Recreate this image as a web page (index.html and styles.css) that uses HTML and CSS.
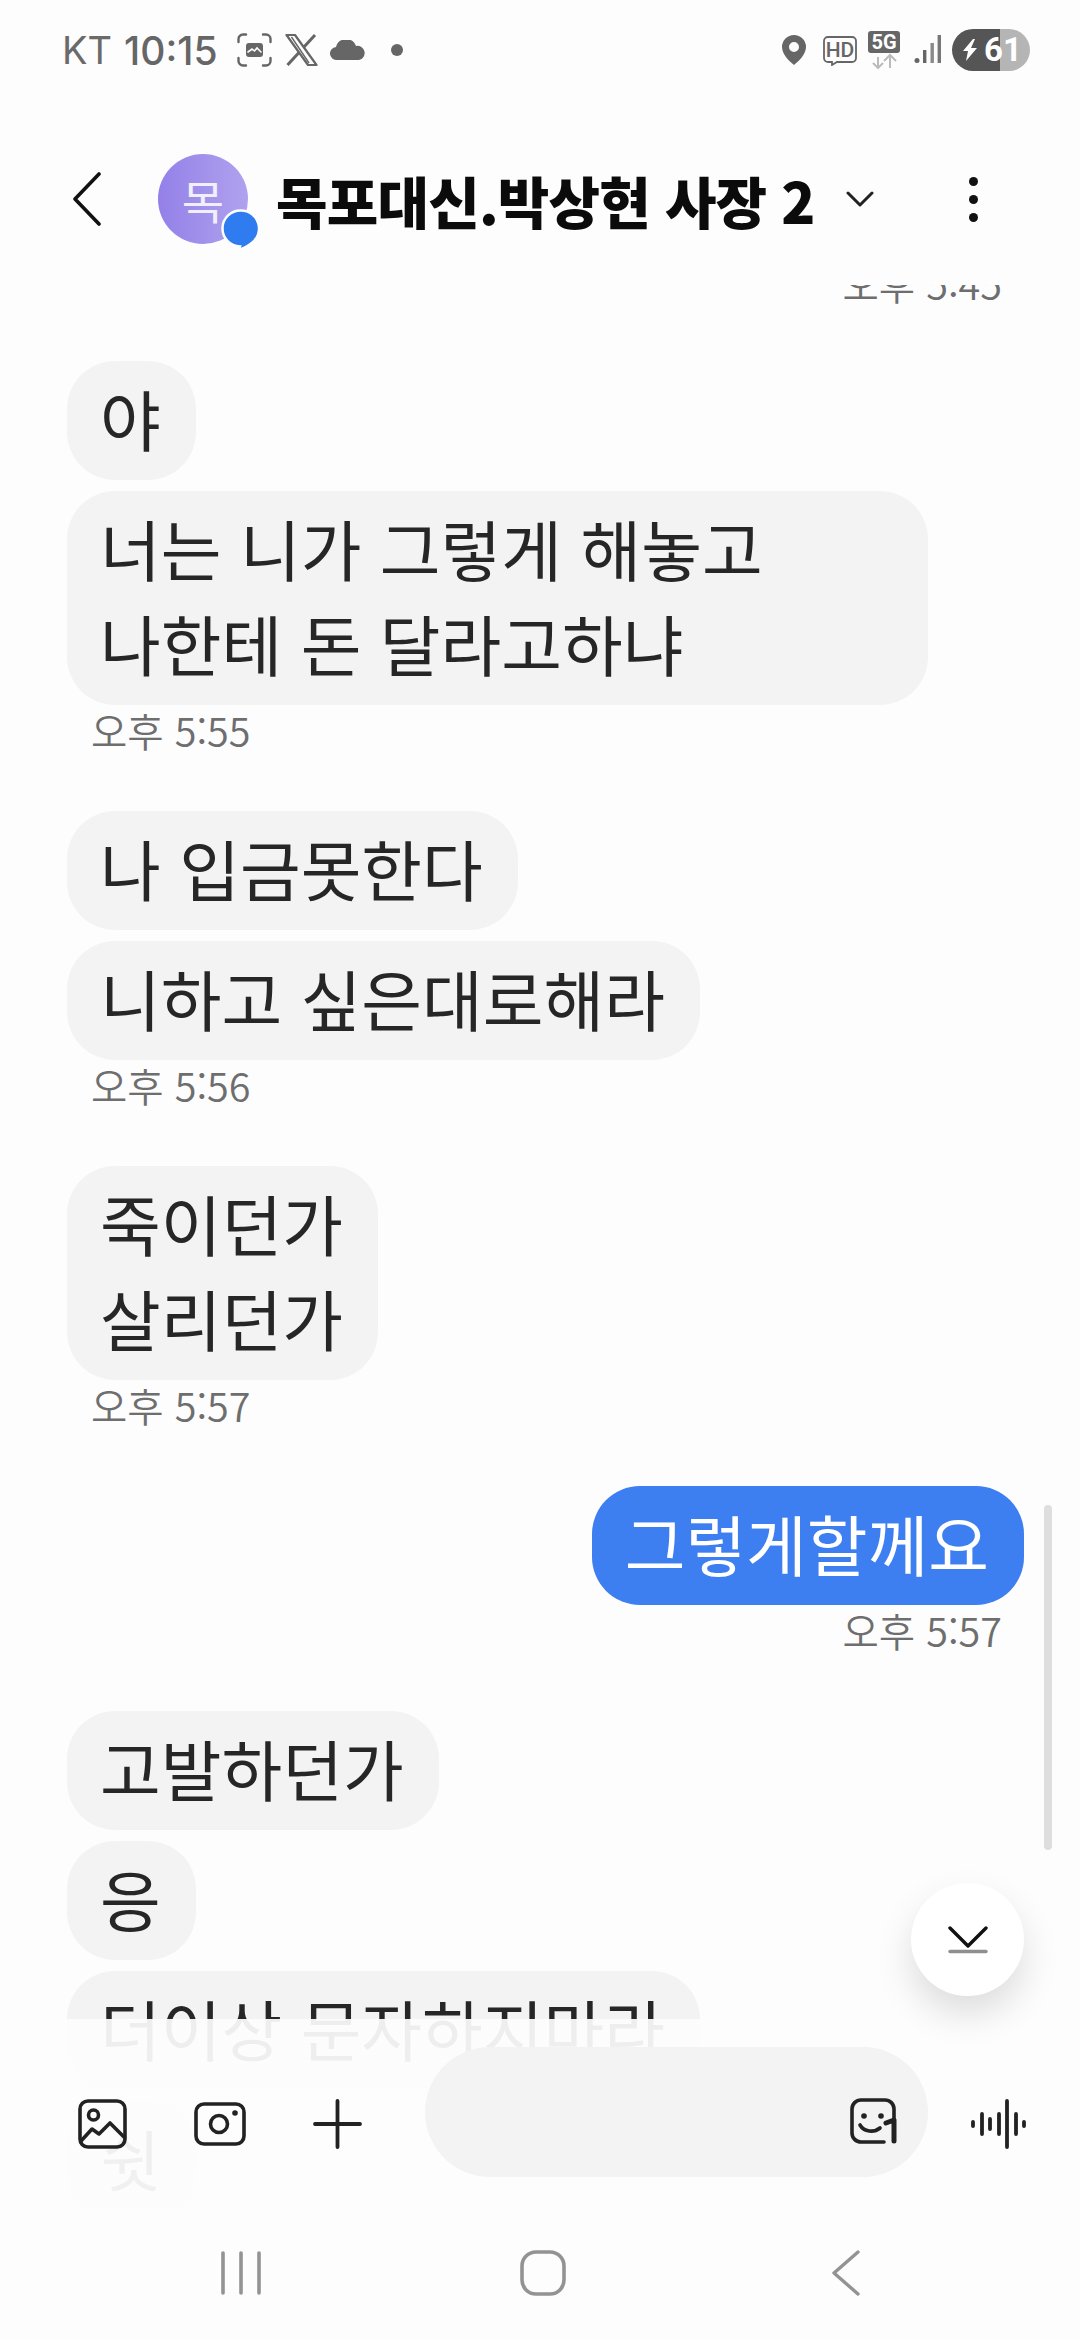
FILE: index.html
```html
<!DOCTYPE html>
<html lang="ko">
<head>
<meta charset="utf-8">
<title>메시지</title>
<link rel="stylesheet" href="styles.css">
</head>
<body>
<div class="phone">
  <div class="thread">
    <div class="group mine">
      <div class="time lead">오후 5:45</div>
    </div>
    <div class="group">
      <div class="bubble">야</div>
      <div class="bubble wide">너는 니가 그렇게 해놓고<br>나한테 돈 달라고하냐</div>
      <div class="time">오후 5:55</div>
    </div>
    <div class="group">
      <div class="bubble">나 입금못한다</div>
      <div class="bubble">니하고 싶은대로해라</div>
      <div class="time">오후 5:56</div>
    </div>
    <div class="group">
      <div class="bubble">죽이던가<br>살리던가</div>
      <div class="time">오후 5:57</div>
    </div>
    <div class="group mine">
      <div class="bubble sent">그렇게할께요</div>
      <div class="time">오후 5:57</div>
    </div>
    <div class="group">
      <div class="bubble">고발하던가</div>
      <div class="bubble">응</div>
      <div class="bubble">더이상 문자하지마라</div>
      <div class="bubble">쉿</div>
    </div>
  </div>
  <div class="veil"></div>

  <header class="top">
    <div class="status">
      <div class="status-left">
        <span class="carrier">KT</span><span class="clock">10:15</span>
        <svg class="ic shot" width="35" height="34" viewBox="0 0 35 34" fill="none" stroke="#666" stroke-width="2.400" stroke-linecap="round"><path d="M1.500 9V6a4.500 4.500 0 0 1 4.500-4.500h3M26 1.500h3A4.500 4.500 0 0 1 33.500 6v3M33.500 25v3a4.500 4.500 0 0 1-4.500 4.500h-3M9 32.500H6A4.500 4.500 0 0 1 1.500 28v-3"/><rect x="9" y="10" width="17" height="14" rx="3" fill="#666" stroke="none"/><path d="M11 19l4-3 2.500 2 2.500-3 4 4" stroke="#fdfdfe" stroke-width="1.600"/></svg>
        <svg class="ic xlogo" width="33" height="32" viewBox="0 0 33 32" fill="none" stroke="#666"><path d="M1.500 1h8.500l21.500 30H23z" stroke-width="2.200" stroke-linejoin="round"/><path d="M6.500 3l17.500 26" stroke-width="1.400"/><path d="M30 1L18.500 13.500M14 18.500L2.500 31" stroke-width="3"/></svg>
        <svg class="ic" width="36" height="20" viewBox="0 0 36 20"><path d="M7 20a6.500 6.500 0 0 1-1-13A10.500 10.500 0 0 1 26 6a7 7 0 0 1 3 14z" fill="#666"/></svg>
        <span class="dot"></span>
      </div>
      <div class="status-right">
        <svg class="pin" width="24" height="30" viewBox="0 0 24 30"><path fill-rule="evenodd" d="M12 0a12 12 0 0 1 12 12c0 7-7 14-12 18C7 26 0 19 0 12A12 12 0 0 1 12 0zm0 7a5 5 0 1 0 0 10 5 5 0 0 0 0-10z" fill="#666"/></svg>
        <svg class="hd" width="34" height="30" viewBox="0 0 34 30"><path d="M5 1h24a4 4 0 0 1 4 4v17a4 4 0 0 1-4 4H14l-5 3v-3H5a4 4 0 0 1-4-4V5a4 4 0 0 1 4-4z" fill="none" stroke="#666" stroke-width="1.800"/><text x="17" y="20.500" text-anchor="middle" class="hd-text">HD</text></svg>
        <svg class="fiveg" width="32" height="38" viewBox="0 0 32 38"><rect width="32" height="22" rx="3" fill="#666"/><text x="16" y="18" text-anchor="middle" class="g-text">5G</text><path d="M10 26v11M5 32l5 5 5-5" fill="none" stroke="#bbb" stroke-width="2"/><path d="M22 37V25M16 30l6-6 6 6" fill="none" stroke="#bbb" stroke-width="2"/></svg>
        <svg class="sig" width="27" height="28" viewBox="0 0 27 28"><circle cx="3" cy="25.500" r="2.500" fill="#666"/><rect x="9" y="15" width="3.400" height="13" fill="#666"/><rect x="16.500" y="8" width="3.400" height="20" fill="#8a8a8a"/><rect x="23.600" y="0" width="3.400" height="28" fill="#777"/></svg>
        <div class="battery"><svg width="14" height="22" viewBox="0 0 14 22"><path d="M10 0L0 12h5L3 22l11-13H8l4-9z" fill="#fff"/></svg><span class="batt-num">61</span></div>
      </div>
    </div>
    <div class="title-bar">
      <svg class="back" width="30" height="54" viewBox="0 0 30 54" fill="none" stroke="#111" stroke-width="3.600" stroke-linecap="round" stroke-linejoin="round"><path d="M27 2L3 27l24 25"/></svg>
      <div class="avatar">목
        <svg class="avatar-badge" width="40" height="42" viewBox="0 0 40 42"><path d="M20 1.500a18 18 0 0 1 10 33c-3 2-7 5-12 6l1-3A18 18 0 0 1 20 1.500z" fill="#2f7cf0" stroke="#fdfdfe" stroke-width="2.500"/></svg>
      </div>
      <div class="name">목포대신.박상현 사장 2</div>
      <svg class="chev" width="28" height="16" viewBox="0 0 28 16" fill="none" stroke="#222" stroke-width="3" stroke-linecap="round" stroke-linejoin="round"><path d="M2 2l12 12L26 2"/></svg>
      <div class="kebab"><i></i><i></i><i></i></div>
    </div>
  </header>

  <button class="fab" type="button" aria-label="맨 아래로">
    <svg width="40" height="28" viewBox="0 0 40 28" fill="none" stroke-linecap="round" stroke-linejoin="round"><path d="M2 2l18 18L38 2" stroke="#111" stroke-width="3.400"/><path d="M2 25.500h36" stroke="#8f8f8f" stroke-width="3.400"/></svg>
  </button>

  <div class="composer">
    <div class="tools">
      <svg width="49" height="50" viewBox="0 0 49 50" fill="none" stroke="#222" stroke-width="3.600" stroke-linecap="round" stroke-linejoin="round"><rect x="2" y="2" width="45" height="46" rx="8"/><circle cx="15.500" cy="16" r="5"/><path d="M3 42l11-12 7 5 11-11 14 14"/></svg>
      <svg width="52" height="44" viewBox="0 0 52 44" fill="none" stroke="#222" stroke-width="3.600"><rect x="2" y="2" width="48" height="40" rx="8"/><circle cx="25" cy="22" r="8.500"/><circle cx="41" cy="11" r="2.800" fill="#222" stroke="none"/></svg>
      <svg width="49" height="50" viewBox="0 0 49 50" fill="none" stroke="#222" stroke-width="3.800" stroke-linecap="round"><path d="M24.500 2v46M2 25h45"/></svg>
    </div>
    <div class="field">
      <svg width="48" height="46" viewBox="0 0 48 46" fill="none" stroke="#222" stroke-width="3.600" stroke-linecap="round" stroke-linejoin="round"><path d="M44 20V11a9 9 0 0 0-9-9H11a9 9 0 0 0-9 9v24a9 9 0 0 0 9 9h23"/><circle cx="14" cy="18" r="2.800" fill="#222" stroke="none"/><circle cx="31" cy="18" r="2.800" fill="#222" stroke="none"/><path d="M10 27c4 7 14 8 20 3"/><path d="M36 25l8-3v21" stroke-width="5"/></svg>
    </div>
    <svg class="voice" width="55" height="50" viewBox="0 0 55 50" fill="none" stroke="#222" stroke-width="3.800" stroke-linecap="round"><path d="M2 23v4M11 15v20M19 20v10M28 15v20M36 2v46M45 15v20M53 23v4"/></svg>
  </div>

  <nav class="nav">
    <svg width="40" height="44" viewBox="0 0 40 44" fill="none" stroke="#939393" stroke-width="3.600" stroke-linecap="round"><path d="M2 2v40M20 2v40M38 2v40"/></svg>
    <svg class="nav-home" width="46" height="46" viewBox="0 0 46 46" fill="none" stroke="#939393" stroke-width="3.600"><rect x="2" y="2" width="42" height="42" rx="14"/></svg>
    <svg width="30" height="46" viewBox="0 0 30 46" fill="none" stroke="#939393" stroke-width="3.400" stroke-linecap="round" stroke-linejoin="round"><path d="M27 2L3 23l24 21"/></svg>
  </nav>

  <div class="scrollbar"></div>
</div>
</body>
</html>
```

FILE: styles.css
```css
* { box-sizing: border-box; }
html, body { margin: 0; padding: 0; }
body {
  width: 1080px;
  height: 2340px;
  overflow: hidden;
  background: #fdfdfe;
  font-family: "Noto Sans CJK KR", "Noto Sans", sans-serif;
}
.phone {
  position: relative;
  width: 1080px;
  height: 2340px;
  overflow: hidden;
  background: #fdfdfe;
}
.thread {
  position: absolute;
  inset: 0;
  padding: 260px 56px 0 67px;
  display: flex;
  flex-direction: column;
  gap: 56px;
}
.group {
  display: flex;
  flex-direction: column;
  align-items: flex-start;
  gap: 11px;
}
.group.mine { align-items: flex-end; }
.bubble {
  padding: 9px 35px 15px 33px;
  font-size: 66px;
  line-height: 95px;
  background: #f3f3f3;
  color: #262626;
  border-radius: 48px;
  white-space: nowrap;
}
.bubble.wide { width: 861px; }
.bubble.sent {
  background: #3d7ef1;
  color: #fff;
}
.time {
  font-size: 39.500px;
  font-weight: 350;
  line-height: 44px;
  color: #6e6e6e;
  padding: 0 24px;
  margin: -8px 0 3px;
  white-space: nowrap;
}
.group.mine .time { padding-right: 22px; }
.time.lead { margin: 1px 0 0; }
.veil {
  position: absolute;
  left: 0;
  right: 0;
  top: 2019px;
  bottom: 0;
  background: linear-gradient(180deg, rgba(253, 253, 254, 0.93) 0, rgba(253, 253, 254, 0.94) 170px, #fdfdfe 205px);
}
.top {
  position: absolute;
  left: 0;
  top: 0;
  width: 100%;
  height: 285px;
  background: #fdfdfe;
}
.status {
  height: 100px;
  padding: 0 50px 0 62px;
  display: flex;
  justify-content: space-between;
  align-items: center;
}
.status-left { display: flex; align-items: center; }
.carrier {
  font-family: "Inter", sans-serif;
  font-size: 38px;
  color: #6a6a6a;
  margin-right: 12px;
}
.clock {
  font-family: "Inter", sans-serif;
  font-weight: 500;
  font-size: 39px;
  color: #666;
  margin-right: 19px;
}
.ic { display: block; margin-right: 13px; }
.xlogo { margin-right: 12px; }
.dot {
  width: 12px;
  height: 12px;
  border-radius: 50%;
  background: #666;
  margin-left: 12px;
}
.status-right { display: flex; align-items: center; }
.status-right svg { display: block; }
.hd { margin-left: 17px; margin-top: 1px; }
.fiveg { margin-left: 11px; margin-bottom: 1px; }
.sig { margin-left: 14px; margin-top: -2px; }
.hd-text { font-family: "Roboto", sans-serif; font-size: 21px; font-weight: 500; fill: #666; }
.g-text { font-family: "Roboto", sans-serif; font-size: 20px; font-weight: 700; fill: #fff; }
.battery {
  width: 78px;
  height: 42px;
  margin-left: 11px;
  border-radius: 21px;
  background: linear-gradient(90deg, #555 0, #555 48px, #b5b5b5 48px, #b5b5b5 100%);
  display: flex;
  align-items: center;
  padding-left: 11px;
  gap: 7px;
}
.batt-num {
  font-family: "Roboto", sans-serif;
  font-weight: 700;
  font-size: 33px;
  line-height: 42px;
  color: #fff;
}
.title-bar {
  height: 98px;
  margin-top: 50px;
  padding-left: 72px;
  display: flex;
  align-items: center;
}
.back { display: block; flex: none; }
.avatar {
  position: relative;
  flex: none;
  width: 90px;
  height: 90px;
  margin-left: 56px;
  border-radius: 50%;
  background: linear-gradient(90deg, #9480e8, #b0a2ee);
  color: #f2effd;
  font-size: 46px;
  display: flex;
  align-items: center;
  justify-content: center;
}
.avatar-badge { position: absolute; left: 63px; top: 55px; }
.name {
  margin-left: 28px;
  font-size: 56px;
  font-weight: 900;
  color: #0b0b0b;
  letter-spacing: -0.800px;
  white-space: nowrap;
}
.chev { display: block; flex: none; margin-left: 31px; }
.kebab {
  margin-left: 95px;
  display: flex;
  flex-direction: column;
  gap: 9px;
}
.kebab i { width: 9px; height: 9px; border-radius: 50%; background: #111; display: block; }
.fab {
  position: absolute;
  left: 911px;
  top: 1883px;
  width: 113px;
  height: 113px;
  border: 0;
  padding: 0;
  border-radius: 50%;
  background: #fff;
  box-shadow: 0 18px 36px rgba(0, 0, 0, 0.13);
  display: flex;
  align-items: center;
  justify-content: center;
}
.composer {
  position: absolute;
  left: 0;
  top: 2047px;
  width: 100%;
  height: 130px;
  padding: 0 54px 0 78px;
  display: flex;
  align-items: flex-start;
}
.tools {
  display: flex;
  align-items: center;
  gap: 67px;
  width: 347px;
  height: 50px;
  margin-top: 52px;
}
.tools svg { display: block; flex: none; }
.field {
  width: 503px;
  height: 130px;
  background: #f3f3f3;
  border-radius: 65px;
  display: flex;
  justify-content: flex-end;
  padding: 51px 30px 0 0;
}
.field svg { display: block; }
.voice { display: block; margin: 52px 0 0 43px; }
.nav {
  position: absolute;
  left: 0;
  top: 2250px;
  width: 100%;
  height: 46px;
  padding-left: 221px;
  display: flex;
  align-items: center;
}
.nav-home { margin: 0 265px 0 259px; }
.scrollbar {
  position: absolute;
  left: 1044px;
  top: 1505px;
  width: 8px;
  height: 345px;
  border-radius: 4px;
  background: #dedede;
}
```
